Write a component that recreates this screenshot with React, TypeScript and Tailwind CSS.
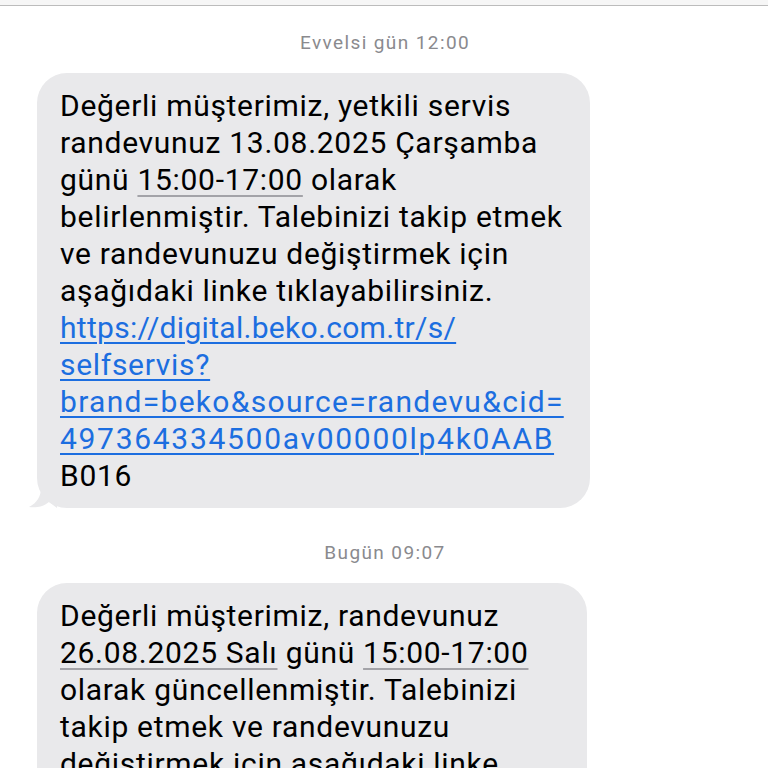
import React from "react";

const font = { fontFamily: "Roboto, 'Liberation Sans', sans-serif" };

function U({ children }: { children: React.ReactNode }) {
  return (
    <span className="underline decoration-[#a3a3a8] decoration-[1.5px] underline-offset-[5px]">
      {children}
    </span>
  );
}

function L({ children, className = "" }: { children: React.ReactNode; className?: string }) {
  return (
    <span
      className={`text-[#1c6ee0] underline decoration-[#1c6ee0] decoration-[1.5px] underline-offset-[4px] ${className}`}
    >
      {children}
    </span>
  );
}

function Stamp({ children }: { children: React.ReactNode }) {
  return (
    <div className="text-center text-[19px] leading-[22px] font-normal tracking-[1.4px] text-[#8a8a8e] pl-[2px]">
      {children}
    </div>
  );
}

function Bubble({
  children,
  width,
  tail,
}: {
  children: React.ReactNode;
  width: string;
  tail?: boolean;
}) {
  return (
    <div className="relative ml-[37px]">
      <div
        className={`${width} rounded-[30px] bg-[#e9e9eb] pl-[23px] pr-[20px] pt-[14px] pb-[14px] text-[30px] leading-[37px] text-black tracking-[0.7px]`}
      >
        {children}
      </div>
      {tail && (
        <svg
          className="absolute left-[-10px] bottom-0"
          width="30"
          height="20"
          viewBox="0 0 30 20"
        >
          <path d="M14 0 C14 8 10 15 2 19 C8 20 16 19 22 14 L30 20 L30 0 Z" fill="#e9e9eb" />
        </svg>
      )}
    </div>
  );
}

export default function App() {
  return (
    <div className="w-[768px] h-[768px] overflow-hidden bg-white" style={font}>
      <div className="h-[6px] bg-[#f6f6f6] border-b-[1.5px] border-[#bcbcbc]" />
      <div className="pt-[26px]">
        <Stamp>Evvelsi gün 12:00</Stamp>
      </div>
      <div className="mt-[19px]">
        <Bubble width="w-[553px]" tail>
          Değerli müşterimiz, yetkili servis
          <br />
          randevunuz 13.08.2025 Çarşamba
          <br />
          günü <U>15:00-17:00</U> olarak
          <br />
          belirlenmiştir. Talebinizi takip etmek
          <br />
          ve randevunuzu değiştirmek için
          <br />
          aşağıdaki linke tıklayabilirsiniz.
          <br />
          <L className="tracking-[0.3px]">https://digital.beko.com.tr/s/</L>
          <br />
          <L>selfservis?</L>
          <br />
          <L className="tracking-[1.3px]">brand=beko&amp;source=randevu&amp;cid=</L>
          <br />
          <L className="tracking-[1.7px]">497364334500av00000lp4k0AAB</L>
          <br />
          B016
        </Bubble>
      </div>
      <div className="mt-[34px]">
        <Stamp>Bugün 09:07</Stamp>
      </div>
      <div className="mt-[19px]">
        <Bubble width="w-[550px]">
          Değerli müşterimiz, randevunuz
          <br />
          <U>26.08.2025 Salı</U> günü <U>15:00-17:00</U>
          <br />
          olarak güncellenmiştir. Talebinizi
          <br />
          takip etmek ve randevunuzu
          <br />
          değiştirmek için aşağıdaki linke
          <br />
          tıklayabilirsiniz.
        </Bubble>
      </div>
    </div>
  );
}
